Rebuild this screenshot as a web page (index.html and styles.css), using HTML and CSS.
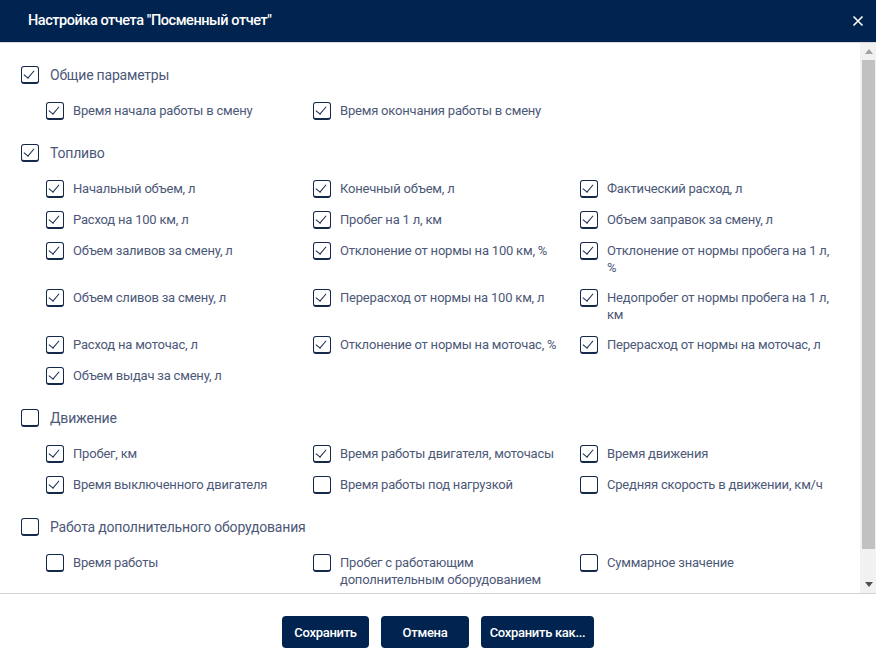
FILE: index.html
```html
<!DOCTYPE html>
<html lang="ru">
<head>
<meta charset="utf-8">
<title>Настройка отчета</title>
<link rel="stylesheet" href="styles.css">
</head>
<body>
<div class="dialog">
  <header class="dlg-header">
    <h1 class="dlg-title">Настройка отчета "Посменный отчет"</h1>
    <button class="dlg-close" aria-label="Закрыть">
      <svg width="12" height="12" viewBox="0 0 12 12"><path d="M1.5 1.5 L10.5 10.5 M10.5 1.5 L1.5 10.5" stroke="#fff" stroke-width="1.6" fill="none"/></svg>
    </button>
  </header>
  <div class="dlg-main">
    <div class="dlg-body">
      <section class="group">
        <label class="cb cb-top"><span class="box on"></span><span class="txt">Общие параметры</span></label>
        <div class="grid">
          <label class="cb"><span class="box on"></span><span class="txt">Время начала работы в смену</span></label>
          <label class="cb"><span class="box on"></span><span class="txt">Время окончания работы в смену</span></label>
        </div>
      </section>
      <section class="group">
        <label class="cb cb-top"><span class="box on"></span><span class="txt">Топливо</span></label>
        <div class="grid">
          <label class="cb"><span class="box on"></span><span class="txt">Начальный объем, л</span></label>
          <label class="cb"><span class="box on"></span><span class="txt">Конечный объем, л</span></label>
          <label class="cb"><span class="box on"></span><span class="txt">Фактический расход, л</span></label>
          <label class="cb"><span class="box on"></span><span class="txt">Расход на 100 км, л</span></label>
          <label class="cb"><span class="box on"></span><span class="txt">Пробег на 1 л, км</span></label>
          <label class="cb"><span class="box on"></span><span class="txt">Объем заправок за смену, л</span></label>
          <label class="cb"><span class="box on"></span><span class="txt">Объем заливов за смену, л</span></label>
          <label class="cb"><span class="box on"></span><span class="txt">Отклонение от нормы на 100 км, %</span></label>
          <label class="cb"><span class="box on"></span><span class="txt">Отклонение от нормы пробега на 1 л, %</span></label>
          <label class="cb"><span class="box on"></span><span class="txt">Объем сливов за смену, л</span></label>
          <label class="cb"><span class="box on"></span><span class="txt">Перерасход от нормы на 100 км, л</span></label>
          <label class="cb"><span class="box on"></span><span class="txt">Недопробег от нормы пробега на 1 л, км</span></label>
          <label class="cb"><span class="box on"></span><span class="txt">Расход на моточас, л</span></label>
          <label class="cb"><span class="box on"></span><span class="txt">Отклонение от нормы на моточас, %</span></label>
          <label class="cb"><span class="box on"></span><span class="txt">Перерасход от нормы на моточас, л</span></label>
          <label class="cb"><span class="box on"></span><span class="txt">Объем выдач за смену, л</span></label>
        </div>
      </section>
      <section class="group">
        <label class="cb cb-top"><span class="box"></span><span class="txt">Движение</span></label>
        <div class="grid">
          <label class="cb"><span class="box on"></span><span class="txt">Пробег, км</span></label>
          <label class="cb"><span class="box on"></span><span class="txt">Время работы двигателя, моточасы</span></label>
          <label class="cb"><span class="box on"></span><span class="txt">Время движения</span></label>
          <label class="cb"><span class="box on"></span><span class="txt">Время выключенного двигателя</span></label>
          <label class="cb"><span class="box"></span><span class="txt">Время работы под нагрузкой</span></label>
          <label class="cb"><span class="box"></span><span class="txt">Средняя скорость в движении, км/ч</span></label>
        </div>
      </section>
      <section class="group">
        <label class="cb cb-top"><span class="box"></span><span class="txt">Работа дополнительного оборудования</span></label>
        <div class="grid">
          <label class="cb"><span class="box"></span><span class="txt">Время работы</span></label>
          <label class="cb"><span class="box"></span><span class="txt">Пробег с работающим дополнительным оборудованием</span></label>
          <label class="cb"><span class="box"></span><span class="txt">Суммарное значение</span></label>
        </div>
      </section>
    </div>
    <div class="scrollbar" aria-hidden="true">
      <div class="sb-btn sb-up"><svg width="8" height="5" viewBox="0 0 8 5"><path d="M0 5 L4 0 L8 5 Z" fill="#a3a3a3"/></svg></div>
      <div class="sb-track"><div class="sb-thumb"></div></div>
      <div class="sb-btn sb-down"><svg width="8" height="5" viewBox="0 0 8 5"><path d="M0 0 L8 0 L4 5 Z" fill="#505050"/></svg></div>
    </div>
  </div>
  <footer class="dlg-footer">
    <button class="btn btn-save">Сохранить</button>
    <button class="btn btn-cancel">Отмена</button>
    <button class="btn btn-saveas">Сохранить как...</button>
  </footer>
</div>
</body>
</html>
```

FILE: styles.css
```css
* { box-sizing: border-box; }
html, body { margin: 0; padding: 0; }
body {
  width: 876px;
  height: 659px;
  overflow: hidden;
  background: #fff;
  font-family: Roboto, "Noto Sans", "DejaVu Sans", sans-serif;
}
.dialog {
  display: flex;
  flex-direction: column;
  height: 659px;
}
.dlg-header {
  flex: 0 0 auto;
  height: 43px;
  background: #002350;
  border-bottom: 1px solid #d6d8dc;
  display: flex;
  align-items: center;
  justify-content: space-between;
  padding: 0 8px 1px 28px;
}
.dlg-title {
  margin: 0;
  color: #fff;
  font-size: 14.5px;
  font-weight: 500;
  letter-spacing: -0.45px;
}
.dlg-close {
  background: none;
  border: 0;
  padding: 4px;
  display: flex;
  cursor: pointer;
}
.dlg-main {
  flex: 1 1 auto;
  min-height: 0;
  display: flex;
}
.dlg-body {
  flex: 1 1 auto;
  min-width: 0;
  overflow: hidden;
  padding: 23px 0 30px 21px;
}
.scrollbar {
  flex: 0 0 16px;
  background: #f1f1f1;
  display: flex;
  flex-direction: column;
}
.sb-btn {
  flex: 0 0 17px;
  display: flex;
  align-items: center;
  justify-content: center;
  padding-left: 1px;
}
.sb-track {
  flex: 1 1 auto;
  padding: 0 1px 0 2px;
}
.sb-thumb {
  height: 489px;
  background: #c1c1c1;
}
.group + .group { margin-top: 24px; }
.cb {
  display: flex;
  align-items: flex-start;
  gap: 9px;
  color: #4c5878;
  font-size: 13px;
  line-height: 17px;
  letter-spacing: -0.2px;
}
.cb-top {
  font-size: 14px;
  line-height: 18px;
  gap: 11px;
}
.box {
  flex: 0 0 18px;
  width: 18px;
  height: 18px;
  border: 1.5px solid #14284a;
  border-bottom-width: 2px;
  border-radius: 3px;
  background: #fff;
  position: relative;
}
.box.on::after {
  content: "";
  position: absolute;
  left: 4px;
  top: 1px;
  width: 5px;
  height: 9px;
  border-right: 1.5px solid #14284a;
  border-bottom: 1.5px solid #14284a;
  transform: rotate(40deg);
}
.grid {
  margin-top: 18px;
  margin-left: 25px;
  display: grid;
  grid-template-columns: repeat(3, 267px);
  row-gap: 13px;
}
.grid .cb { padding-right: 10px; }
.dlg-footer {
  flex: 0 0 66px;
  border-top: 1px solid #d4d4d4;
  display: flex;
  justify-content: center;
  align-items: flex-start;
  gap: 12px;
  padding-top: 22px;
}
.btn {
  height: 32px;
  border: 0;
  border-radius: 4px;
  background: #002350;
  color: #fff;
  font-family: Roboto, "Noto Sans", sans-serif;
  font-size: 13px;
  font-weight: 500;
  letter-spacing: -0.3px;
  white-space: nowrap;
  padding: 0 8px;
  cursor: pointer;
}
.btn-save { width: 87px; }
.btn-cancel { width: 88px; }
.btn-saveas { width: 113px; }
```
